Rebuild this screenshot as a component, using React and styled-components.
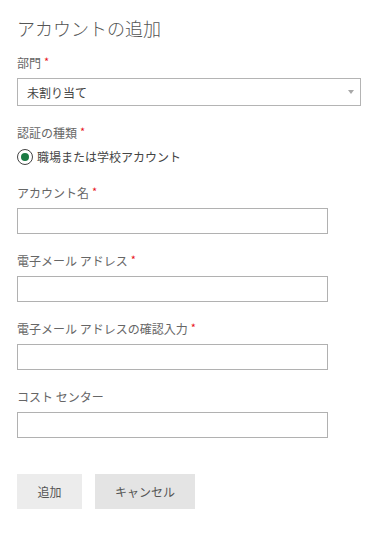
import React from 'react';
import styled, { createGlobalStyle } from 'styled-components';

const GlobalStyle = createGlobalStyle`
  html, body {
    margin: 0;
    padding: 0;
    background: #fff;
  }
  body {
    font-family: "Segoe UI", "Noto Sans CJK JP", "Noto Sans", sans-serif;
  }
`;

const fields = [
  { label: 'アカウント名', required: true },
  { label: '電子メール アドレス', required: true },
  { label: '電子メール アドレスの確認入力', required: true },
  { label: 'コスト センター', required: false },
];

const App = () => {
  return (
    <>
      <GlobalStyle />
      <Panel>
        <Title>アカウントの追加</Title>
        <Form>
          <Field>
            <Label>
              部門<Star>*</Star>
            </Label>
            <SelectBox>
              <span>未割り当て</span>
              <Arrow />
            </SelectBox>
          </Field>

          <Field>
            <Label>
              認証の種類<Star>*</Star>
            </Label>
            <RadioRow>
              <RadioCircle>
                <RadioDot />
              </RadioCircle>
              <RadioText>職場または学校アカウント</RadioText>
            </RadioRow>
          </Field>

          {fields.map((f) => (
            <Field key={f.label}>
              <Label>
                {f.label}
                {f.required && <Star>*</Star>}
              </Label>
              <TextInput type="text" />
            </Field>
          ))}
        </Form>

        <Buttons>
          <Button $width={65}>追加</Button>
          <Button $width={100} $dark>キャンセル</Button>
        </Buttons>
      </Panel>
    </>
  );
};

export default App;

const Panel = styled.div`
  padding: 14px 10px 20px 17px;
  box-sizing: border-box;
  width: 371px;
`;

const Title = styled.h1`
  margin: 0 0 12px 0;
  font-size: 18px;
  line-height: 28px;
  font-weight: 300;
  color: #555;
`;

const Form = styled.div`
  display: flex;
  flex-direction: column;
  gap: 18px;
`;

const Field = styled.div`
  display: flex;
  flex-direction: column;
  gap: 6px;
`;

const Label = styled.label`
  display: block;
  height: 18px;
  font-size: 12px;
  line-height: 18px;
  color: #666;
`;

const Star = styled.span`
  display: inline-block;
  color: #e81123;
  font-size: 11px;
  line-height: 1;
  margin-left: 3px;
  vertical-align: top;
  padding-top: 2px;
`;

const SelectBox = styled.div`
  display: flex;
  align-items: center;
  justify-content: space-between;
  height: 28px;
  width: 344px;
  box-sizing: border-box;
  border: 1px solid #b4b4b4;
  padding: 0 6px 0 9px;
  font-size: 12px;
  color: #444;
`;

const Arrow = styled.span`
  width: 0;
  height: 0;
  border-left: 3.5px solid transparent;
  border-right: 3.5px solid transparent;
  border-top: 4px solid #a8a8a8;
`;

const RadioRow = styled.div`
  display: flex;
  align-items: center;
  gap: 4px;
  height: 18px;
  line-height: 18px;
`;

const RadioCircle = styled.span`
  width: 16px;
  height: 16px;
  box-sizing: border-box;
  border: 1px solid #444;
  border-radius: 50%;
  display: flex;
  align-items: center;
  justify-content: center;
`;

const RadioDot = styled.span`
  width: 8px;
  height: 8px;
  border-radius: 50%;
  background: #1a7a43;
`;

const RadioText = styled.span`
  font-size: 12px;
  color: #444;
`;

const TextInput = styled.input`
  display: block;
  width: 311px;
  height: 26px;
  box-sizing: border-box;
  border: 1px solid #b1b1b1;
  border-radius: 0;
  margin: 0;
  padding: 0 8px;
  outline: none;
  font-family: inherit;
  font-size: 12px;
`;

const Buttons = styled.div`
  display: flex;
  gap: 13px;
  margin-top: 36px;
`;

const Button = styled.button`
  width: ${(p) => p.$width}px;
  height: 35px;
  border: none;
  border-radius: 0;
  padding: 0;
  background: ${(p) => (p.$dark ? '#e4e4e4' : '#ececec')};
  color: #555;
  font-family: inherit;
  font-size: 12px;
`;
